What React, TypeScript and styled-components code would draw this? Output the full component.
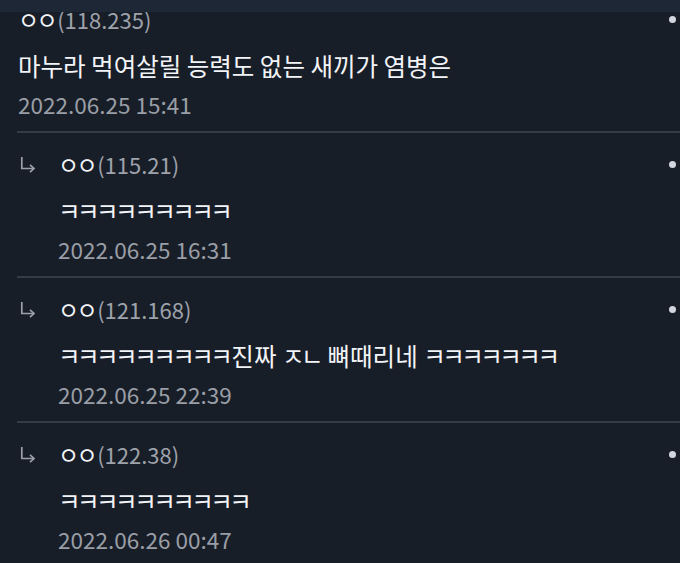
import React from "react";
import styled, { createGlobalStyle } from "styled-components";

const Global = createGlobalStyle`
  html, body { margin: 0; padding: 0; background: #181e28; }
  body { font-family: "Noto Sans CJK KR", "Noto Sans", sans-serif; }
`;

const Page = styled.div`
  position: relative;
  width: 680px;
  height: 563px;
  overflow: hidden;
  background: #181e28;
`;

const HeaderEdge = styled.div`
  position: absolute;
  left: 0;
  top: 0;
  right: 0;
  height: 12px;
  background: #1d2735;
  z-index: 2;
`;

const Comment = styled.div<{ $reply?: boolean; $first?: boolean }>`
  display: grid;
  grid-template-columns: ${(p) => (p.$reply ? "40px 1fr 20px" : "0 1fr 20px")};
  padding: ${(p) => (p.$first ? "4px" : "16px")} 0 12px ${(p) => (p.$first ? "18px" : "1px")};
  border-top: ${(p) => (p.$first ? "none" : "2px solid #363c46")};
  margin-left: ${(p) => (p.$first ? "0" : "17px")};
`;

const Gutter = styled.div`
  display: flex;
  align-items: center;
  height: 30px;
  padding-left: 2px;
`;

const Main = styled.div`
  display: flex;
  flex-direction: column;
`;

const NameRow = styled.div`
  height: 30px;
  line-height: 30px;
  font-size: 22px;
  color: #9ea2aa;
  white-space: nowrap;
`;

const Nick = styled.span`
  color: #f2f4f7;
  font-size: 23px;
  letter-spacing: -2.6px;
  margin-right: 2px;
  line-height: 30px;
`;

const Body = styled.div`
  margin-top: 17px;
  height: 30px;
  line-height: 30px;
  font-size: 24.5px;
  color: #f2f4f7;
  white-space: nowrap;
`;

const Jamo = styled.span`
  font-size: 24.5px;
  letter-spacing: -3.5px;
  margin-right: 2px;
  line-height: 30px;
`;

const DateText = styled.div`
  margin-top: 8px;
  height: 30px;
  line-height: 30px;
  font-size: 22.5px;
  color: #9a9ea6;
  white-space: nowrap;
`;

const MenuCol = styled.div`
  display: flex;
  justify-content: center;
  height: 30px;
  align-items: center;
`;

const Dot = styled.span`
  display: block;
  width: 7px;
  height: 7px;
  border-radius: 50%;
  background: #d2d6de;
  margin-left: 4px;
`;

const ReplyArrow = () => (
  <svg width="16" height="17" viewBox="0 0 16 17" fill="none">
    <path d="M1.8 1 V12.5 H14" stroke="#9ca0a8" strokeWidth="1.7" />
    <path d="M10 8.8 L14 12.5 L10 16.2" stroke="#9ca0a8" strokeWidth="1.7" />
  </svg>
);

type C = { ip: string; body: React.ReactNode; date: string; reply?: boolean };

const J = (s: string) => <Jamo>{s}</Jamo>;

const data: C[] = [
  { ip: "(118.235)", body: "마누라 먹여살릴 능력도 없는 새끼가 염병은", date: "2022.06.25 15:41" },
  { ip: "(115.21)", body: J("ㅋㅋㅋㅋㅋㅋㅋㅋㅋ"), date: "2022.06.25 16:31", reply: true },
  {
    ip: "(121.168)",
    body: (
      <>
        {J("ㅋㅋㅋㅋㅋㅋㅋㅋㅋ")}진짜 {J("ㅈㄴ")} 뼈때리네 {J("ㅋㅋㅋㅋㅋㅋㅋ")}
      </>
    ),
    date: "2022.06.25 22:39",
    reply: true,
  },
  { ip: "(122.38)", body: J("ㅋㅋㅋㅋㅋㅋㅋㅋㅋㅋ"), date: "2022.06.26 00:47", reply: true },
];

export default function App() {
  return (
    <Page>
      <Global />
      <HeaderEdge />
      {data.map((c, i) => (
        <Comment key={i} $reply={c.reply} $first={i === 0}>
          <Gutter>{c.reply ? <ReplyArrow /> : null}</Gutter>
          <Main>
            <NameRow>
              <Nick>ㅇㅇ</Nick>
              {c.ip}
            </NameRow>
            <Body>{c.body}</Body>
            <DateText>{c.date}</DateText>
          </Main>
          <MenuCol>
            <Dot />
          </MenuCol>
        </Comment>
      ))}
    </Page>
  );
}
